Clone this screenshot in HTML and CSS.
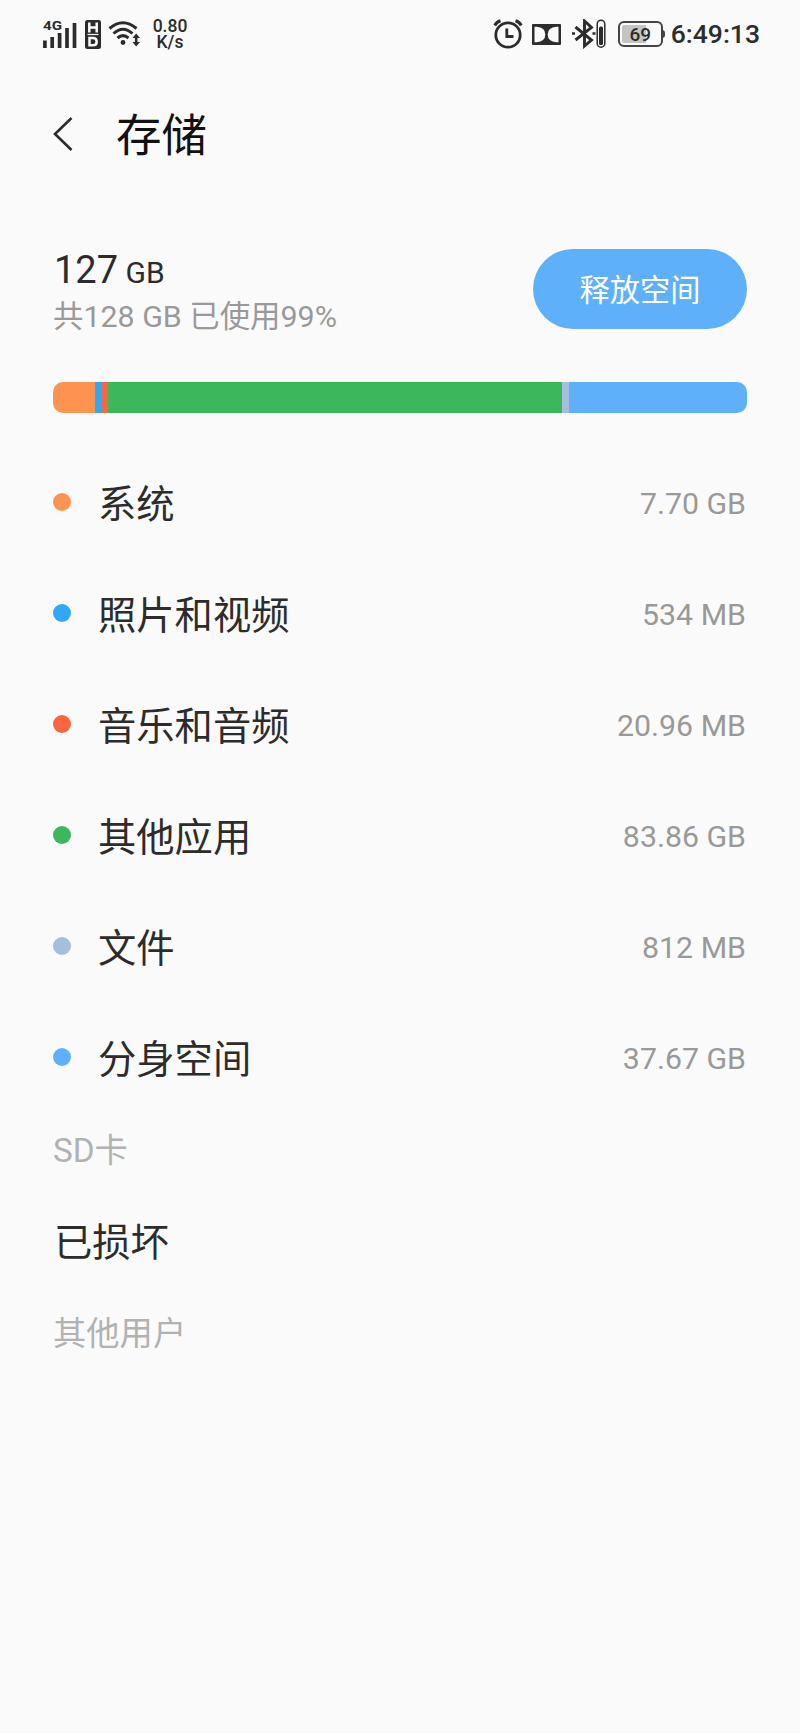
FILE: index.html
```
<!DOCTYPE html>
<html lang="zh-CN">

<head>
    <meta charset="UTF-8">
    <meta name="viewport" content="width=device-width, initial-scale=1.0">
    <title>存储</title>
    <link rel="stylesheet" href="styles.css">
</head>

<body>
    <!-- 状态栏 -->
    <div class="status-bar">
        <div class="status-left">
            <svg class="icon-signal" width="34" height="30" viewBox="0 0 34 30">
                <text x="0" y="10.5" class="signal-text" textLength="19" lengthAdjust="spacingAndGlyphs">4G</text>
                <path d="M1.900 21.500v7.500M9.200 18v11M16.600 14v15M24 9V29M31.500 4V29" stroke="#2c2c2c" stroke-width="3.7" />
            </svg>
            <svg class="icon-hd" width="16" height="29" viewBox="0 0 16 29">
                <rect width="16" height="29" rx="2.5" fill="#2c2c2c" />
                <path d="M4.300 2.500v10M11.700 2.500v10M4.300 7.500h7.400" stroke="#fafafa" stroke-width="2.500" fill="none" />
                <path d="M2.500 14.500h11" stroke="#fafafa" stroke-width="1.200" />
                <path d="M4.500 18v7.300h3.500q3.700 0 3.700-3.650t-3.700-3.650z" stroke="#fafafa" stroke-width="2.500" fill="none" />
            </svg>
            <svg class="icon-wifi" width="33" height="28" viewBox="0 0 33 28">
                <g fill="none" stroke="#2c2c2c" stroke-width="3">
                    <path d="M1.500 8.500Q15 -3 28.500 8.500" />
                    <path d="M5.500 13.500Q15 5 24.500 13.500" />
                    <path d="M9.500 18Q15 13.200 20.500 18" />
                </g>
                <circle cx="15" cy="22.500" r="2.400" fill="#2c2c2c" />
                <path d="M28.200 13.500l3.800 4.500h-2.500v4h2.500l-3.800 4.500-3.800-4.500h2.500v-4h-2.500z" fill="#2c2c2c" />
            </svg>
            <div class="speed">0.80<br>K/s</div>
        </div>
        <div class="status-right">
            <svg class="icon-alarm" width="30" height="30" viewBox="0 0 30 30">
                <g fill="none" stroke="#2c2c2c" stroke-width="2.800">
                    <circle cx="15" cy="16" r="12.200" />
                    <path d="M13.800 9.500V17.500H20.500" />
                    <path d="M1.800 6.500Q3.500 3 7.500 1.800M22.500 1.800Q26.500 3 28.200 6.500" stroke-width="3" />
                </g>
            </svg>
            <svg class="icon-dolby" width="29" height="21" viewBox="0 0 29 21">
                <rect width="29" height="21" rx="1" fill="#2c2c2c" />
                <path d="M2.500 2.800H4.500Q13.300 3.500 13.300 10.500T4.500 18.200H2.500Z" fill="#fafafa" />
                <path d="M26.500 2.800H24.500Q15.700 3.500 15.700 10.500T24.500 18.200H26.500Z" fill="#fafafa" />
            </svg>
            <svg class="icon-bluetooth" width="34" height="30" viewBox="0 0 34 30">
                <path d="M3.500 8L19.500 21L12.500 27V2L19.500 8.500L3.500 21" fill="none" stroke="#2c2c2c" stroke-width="2.900" />
                <path d="M0 14.500h3M20.500 14.500h3" stroke="#2c2c2c" stroke-width="2.500" />
                <rect x="25.200" y="1.200" width="7.600" height="27" rx="3.800" fill="none" stroke="#2c2c2c" stroke-width="1.500" />
                <rect x="27" y="7.500" width="4" height="18.500" rx="1.500" fill="#2c2c2c" />
            </svg>
            <div class="battery">69</div>
            <span class="clock">6:49:13</span>
        </div>
    </div>

    <!-- 标题栏 -->
    <header class="header">
        <svg class="back" width="20" height="36" viewBox="0 0 20 36">
            <path d="M18.500 2L2 18L18.500 34" fill="none" stroke="#2c2c2c" stroke-width="2.600" />
        </svg>
        <h1>存储</h1>
    </header>

    <main class="content">
        <!-- 容量概览 -->
        <section class="summary">
            <div>
                <div class="used">127 <small>GB</small></div>
                <div class="total">共128 GB 已使用99%</div>
            </div>
            <button class="free-button">释放空间</button>
        </section>

        <div class="usage-bar">
            <div class="system" style="width: 42px"></div>
            <div class="photo" style="width: 7px"></div>
            <div class="music" style="width: 6px"></div>
            <div class="app" style="width: 454px"></div>
            <div class="file" style="width: 7px"></div>
            <div class="clone" style="width: 178px"></div>
        </div>

        <!-- 分类列表 -->
        <ul class="list">
            <li><i class="dot system"></i><span class="name">系统</span><span class="size">7.70 GB</span></li>
            <li><i class="dot photo"></i><span class="name">照片和视频</span><span class="size">534 MB</span></li>
            <li><i class="dot music"></i><span class="name">音乐和音频</span><span class="size">20.96 MB</span></li>
            <li><i class="dot app"></i><span class="name">其他应用</span><span class="size">83.86 GB</span></li>
            <li><i class="dot file"></i><span class="name">文件</span><span class="size">812 MB</span></li>
            <li><i class="dot clone"></i><span class="name">分身空间</span><span class="size">37.67 GB</span></li>
        </ul>

        <h2>SD卡</h2>
        <p class="sd-state">已损坏</p>
        <h2>其他用户</h2>
    </main>
</body>

</html>
```
FILE: styles.css
```
* {
    box-sizing: border-box;
}

body {
    margin: 0;
    min-height: 100vh;
    background: #fafafa;
    color: #2c2c2c;
    font-family: Roboto, "Noto Sans CJK SC", sans-serif;
}

/* 状态栏 */
.status-bar {
    display: flex;
    justify-content: space-between;
    height: 68px;
    padding: 0 40px 0 43px;
}

.status-left,
.status-right {
    display: flex;
    align-items: center;
}

.icon-signal {
    overflow: visible;
}

.signal-text {
    font-size: 13.5px;
    font-weight: 700;
    fill: #2c2c2c;
}

.icon-hd {
    margin-left: 8px;
    margin-right: 7px;
}

.speed {
    width: 36px;
    margin-left: 11px;
    font-size: 17.5px;
    font-weight: 500;
    line-height: 16.5px;
    text-align: center;
}

.icon-dolby {
    margin-left: 9px;
    margin-right: 11px;
}

.battery {
    position: relative;
    width: 45px;
    height: 26px;
    margin-left: 12px;
    margin-right: 8px;
    border: 2px solid #444;
    border-radius: 6px;
    background: linear-gradient(90deg, #c4c4c4 65%, #fafafa 65%) content-box;
    padding: 2px;
    font-size: 19px;
    font-weight: 500;
    line-height: 19px;
    text-align: center;
}

/* 电池正极 */
.battery::after {
    content: "";
    position: absolute;
    top: 7px;
    right: -4px;
    width: 3px;
    height: 8px;
    border-radius: 0 3px 3px 0;
    background: #444;
}

.clock {
    font-size: 26.5px;
    font-weight: 500;
    line-height: 30px;
}

/* 标题栏 */
.header {
    display: flex;
    align-items: center;
    gap: 43px;
    height: 132px;
    padding: 0 53px;
}

.header h1 {
    margin: 0;
    padding-bottom: 4px;
    font-size: 45.5px;
    font-weight: 400;
    color: #111;
}

.content {
    padding: 49px 53px 0;
}

/* 容量概览 */
.summary {
    display: flex;
    justify-content: space-between;
    height: 80px;
}

.used {
    padding-left: 1px;
    font-size: 38px;
    line-height: 42px;
    word-spacing: -2px;
}

.used small {
    font-size: 30px;
}

.total {
    font-size: 30.4px;
    line-height: 46px;
    color: #999;
    white-space: nowrap;
}

.free-button {
    width: 214px;
    height: 80px;
    padding: 0 0 3px;
    border: none;
    border-radius: 40px;
    background: #5fb0fb;
    color: #fff;
    font-family: inherit;
    font-size: 30.2px;
}

.usage-bar {
    display: flex;
    height: 31px;
    margin-top: 53px;
    border-radius: 10px;
    overflow: hidden;
}

/* 分类颜色 */
.system {
    background: #fd9351;
}

.photo {
    background: #30a8f8;
}

.music {
    background: #f9663f;
}

.app {
    background: #3cb75b;
}

.file {
    background: #a6bddb;
}

.clone {
    background: #5fb0fb;
}

/* 分类列表 */
.list {
    margin: 33px 0 0;
    padding: 0;
    list-style: none;
}

.list li {
    display: flex;
    align-items: center;
    height: 111px;
}

.dot {
    width: 18px;
    height: 18px;
    margin-right: 27px;
    border-radius: 50%;
}

.name {
    flex: 1;
    font-size: 38.3px;
}

.size {
    padding-top: 3px;
    padding-right: 1px;
    font-size: 30.3px;
    color: #999;
}

h2 {
    margin: 0;
    height: 76px;
    font-size: 33.3px;
    font-weight: 400;
    line-height: 78px;
    color: #b2b2b2;
}

.sd-state {
    margin: 0;
    padding-left: 1px;
    height: 107px;
    font-size: 38.3px;
    line-height: 109px;
}
```
